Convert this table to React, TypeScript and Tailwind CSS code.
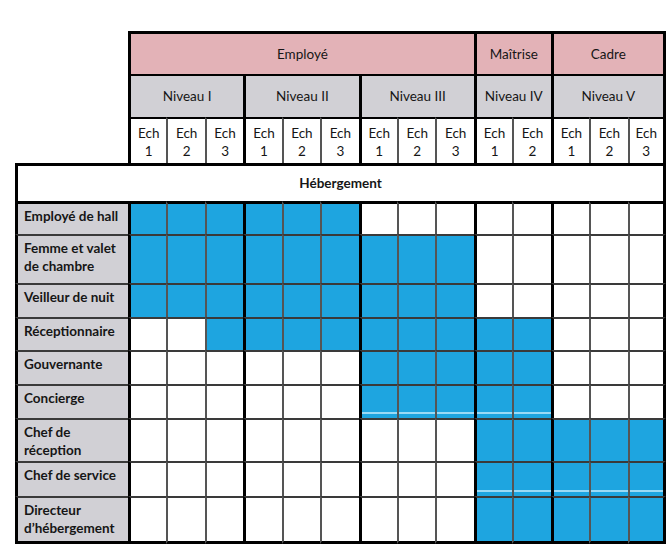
import React from 'react';

type Row = {
  label: string[];
  from: number;
  to: number;
  streak?: boolean;
};

const rows: Row[] = [
  { label: ['Employé de hall'], from: 0, to: 5 },
  { label: ['Femme et valet', 'de chambre'], from: 0, to: 8 },
  { label: ['Veilleur de nuit'], from: 0, to: 8 },
  { label: ['Réceptionnaire'], from: 2, to: 10 },
  { label: ['Gouvernante'], from: 6, to: 10 },
  { label: ['Concierge'], from: 6, to: 10, streak: true },
  { label: ['Chef de', 'réception'], from: 9, to: 13 },
  { label: ['Chef de service'], from: 9, to: 13, streak: true },
  { label: ['Directeur', 'd’hébergement'], from: 9, to: 13 },
];

const categories = [
  { name: 'Employé', span: 'col-span-9' },
  { name: 'Maîtrise', span: 'col-span-2' },
  { name: 'Cadre', span: 'col-span-3' },
];

const levels = [
  { name: 'Niveau I', span: 'col-span-3', n: 3 },
  { name: 'Niveau II', span: 'col-span-3', n: 3 },
  { name: 'Niveau III', span: 'col-span-3', n: 3 },
  { name: 'Niveau IV', span: 'col-span-2', n: 2 },
  { name: 'Niveau V', span: 'col-span-3', n: 3 },
];

// columns where a new level starts: drawn with a heavier black rule
const groupStarts = new Set([0, 3, 6, 9, 11]);

const echs = levels.flatMap((l) => Array.from({ length: l.n }, (_, i) => i + 1));

function leftRule(col: number) {
  return groupStarts.has(col) ? 'border-l-[3px] border-l-black' : 'border-l-2 border-l-[#555]';
}

export default function App() {
  return (
    <div className="min-h-[558px] w-[672px] bg-white pl-[15px] pt-[31px] font-['Lato',sans-serif] text-[13.5px] text-[#161616]">
      <div className="grid w-[651px] grid-cols-[113px_repeat(14,minmax(0,1fr))] grid-rows-[43px_43px_46px_38px_33px_49px_34px_33px_34px_34px_43px_35px_48px]">
        <div className="col-start-1 row-span-3 row-start-1" />

        {categories.map((c, i) => (
          <div
            key={c.name}
            className={`${c.span} row-start-1 flex items-center justify-center border-t-[3px] border-t-black border-l-[3px] border-l-black bg-[#e3b2b7] ${
              i === categories.length - 1 ? 'border-r-[3px] border-r-black' : ''
            }`}
          >
            {c.name}
          </div>
        ))}

        {levels.map((l, i) => (
          <div
            key={l.name}
            className={`${l.span} row-start-2 flex items-center justify-center border-t-2 border-t-black border-l-[3px] border-l-black bg-[#d1d0d5] ${
              i === levels.length - 1 ? 'border-r-[3px] border-r-black' : ''
            }`}
          >
            {l.name}
          </div>
        ))}

        {echs.map((n, col) => (
          <div
            key={`ech-${col}`}
            className={`row-start-3 flex flex-col items-center justify-center border-t-2 border-t-black bg-white pt-[2px] leading-[18px] ${leftRule(col)} ${
              col === 13 ? 'border-r-[3px] border-r-black' : ''
            }`}
          >
            <span>Ech</span>
            <span>{n}</span>
          </div>
        ))}

        <div className="col-span-15 row-start-4 flex items-center justify-center border-x-[3px] border-t-[3px] border-black bg-white font-bold">
          Hébergement
        </div>

        {rows.map((r, ri) => {
          const top = ri === 0 ? 'border-t-[3px] border-t-black' : 'border-t-2 border-t-[#3a3a3a]';
          const last = ri === rows.length - 1 ? 'border-b-[3px] border-b-black' : '';
          return (
            <React.Fragment key={r.label.join(' ')}>
              <div
                className={`flex flex-col justify-start border-l-[3px] border-l-black bg-[#d1d0d5] pl-[6px] pt-[3px] font-bold leading-[18px] ${top} ${last}`}
              >
                {r.label.map((t) => (
                  <span key={t}>{t}</span>
                ))}
              </div>
              {echs.map((_, col) => {
                const filled = col >= r.from && col <= r.to;
                return (
                  <div
                    key={col}
                    className={`flex flex-col justify-end ${filled ? 'bg-[#1ea5e0]' : 'bg-white'} ${leftRule(col)} ${top} ${last} ${
                      col === 13 ? 'border-r-[3px] border-r-black' : ''
                    }`}
                  >
                    {filled && r.streak ? <div className="mb-[4px] h-[2px] bg-[#9adaf6]" /> : null}
                  </div>
                );
              })}
            </React.Fragment>
          );
        })}
      </div>
    </div>
  );
}
